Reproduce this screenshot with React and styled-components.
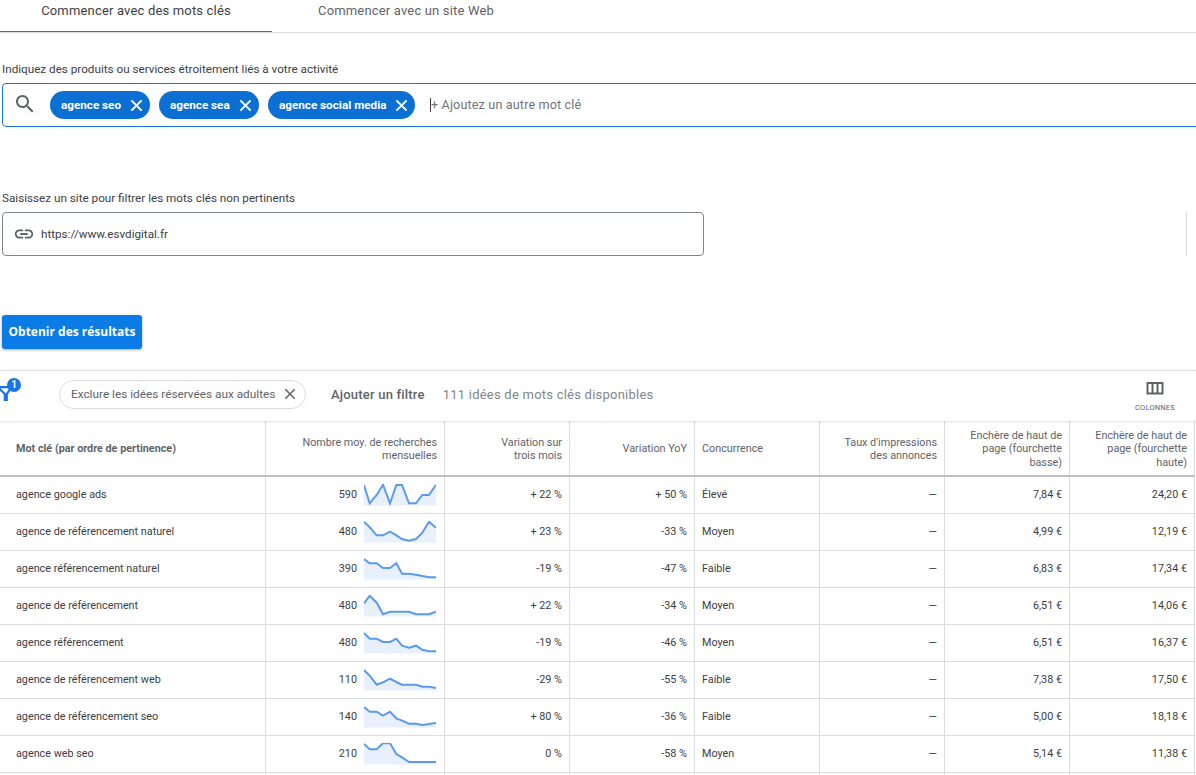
import React from "react";
import styled, { createGlobalStyle } from "styled-components";

const GlobalStyle = createGlobalStyle`
  html, body {
    margin: 0;
    height: 100%;
    overflow: hidden;
    background: #fff;
    font-family: Roboto, "Liberation Sans", sans-serif;
  }
`;

const Page = styled.div`
  width: 1196px;
  height: 775px;
  overflow: hidden;
`;

const Tabs = styled.div`
  display: flex;
  height: 33px;
  box-sizing: border-box;
  border-bottom: 1px solid #dadce0;
`;

const Tab = styled.div`
  width: ${(props) => (props.$active ? 272 : 268)}px;
  height: 32px;
  box-sizing: border-box;
  padding-top: 3px;
  text-align: center;
  font-size: 13px;
  line-height: 16px;
  letter-spacing: 0.17px;
  color: ${(props) => (props.$active ? "#3c4043" : "#5f6368")};
  border-bottom: ${(props) => (props.$active ? "1px solid #1a73e8" : "none")};
`;

const Form = styled.div`
  padding: 29px 0 0 2px;
`;

const Label = styled.div`
  height: 14px;
  margin-top: ${(props) => props.$top || 0}px;
  font-size: 11.7px;
  line-height: 14px;
  color: #3c4043;
`;

const KeywordBox = styled.div`
  display: flex;
  align-items: center;
  width: 1210px;
  height: 44px;
  box-sizing: border-box;
  margin-top: 7px;
  padding-left: 10px;
  border: 1px solid #1a73e8;
  border-radius: 4px;
`;

const SearchIcon = styled.svg`
  width: 24px;
  height: 24px;
  fill: #5f6368;
  margin-right: 13px;
  margin-top: -2px;
`;

const Chips = styled.div`
  display: flex;
  gap: 9px;
`;

const Chip = styled.div`
  display: flex;
  align-items: center;
  justify-content: space-between;
  width: ${(props) => props.$width}px;
  height: 28px;
  box-sizing: border-box;
  padding: 0 4px 0 11px;
  border-radius: 14px;
  background: #0b6fd3;
  color: #fff;
  font-size: 11.7px;
  font-weight: 700;
`;

const ChipClose = styled.svg`
  width: 19px;
  height: 19px;
  fill: #fff;
  stroke: #fff;
  stroke-width: 0.7;
`;

const Placeholder = styled.div`
  margin-left: 15px;
  border-left: 1px solid #3c4043;
  height: 14px;
  line-height: 14px;
  font-size: 12.6px;
  color: #70757a;
  letter-spacing: 0.15px;
  white-space: nowrap;
`;

const SiteRow = styled.div`
  display: flex;
  margin-top: 7px;
`;

const SiteBox = styled.div`
  display: flex;
  align-items: center;
  width: 702px;
  height: 44px;
  box-sizing: border-box;
  padding-left: 10px;
  border: 1px solid #80868b;
  border-radius: 4px;
  font-size: 11.65px;
  color: #3c4043;
`;

const LinkIcon = styled.svg`
  width: 22px;
  height: 22px;
  fill: #5f6368;
  margin-right: 6px;
`;

const SideRule = styled.div`
  width: 1px;
  height: 44px;
  margin-left: 482px;
  background: #dadce0;
`;

const SubmitButton = styled.button`
  display: block;
  width: 140px;
  height: 34px;
  margin: 59px 0 0;
  padding: 0 0 2px;
  border: 0;
  border-radius: 3px;
  background: #0b7ce6;
  color: #fff;
  font-family: "Open Sans", sans-serif;
  font-size: 12px;
  font-weight: 700;
  box-shadow: 0 1px 3px rgba(60, 64, 67, 0.45);
`;

const FilterBar = styled.div`
  position: relative;
  display: flex;
  align-items: center;
  height: 51px;
  box-sizing: border-box;
  margin-top: 21px;
  padding-bottom: 4px;
  border-top: 1px solid #e0e0e0;
  box-shadow: 0 1px 2px rgba(60, 64, 67, 0.15);
`;

const FilterIcon = styled.svg`
  position: absolute;
  left: 0;
  top: 15px;
  width: 12px;
  height: 15px;
  fill: none;
  stroke: #1a73e8;
  stroke-width: 2.2;
`;

const Badge = styled.div`
  position: absolute;
  left: 7px;
  top: 7px;
  width: 14px;
  height: 14px;
  border-radius: 50%;
  background: #1a73e8;
  color: #fff;
  font-size: 10px;
  font-weight: 700;
  line-height: 14px;
  text-align: center;
`;

const AdultChip = styled.div`
  display: flex;
  align-items: center;
  justify-content: space-between;
  width: 247px;
  height: 29px;
  box-sizing: border-box;
  margin-left: 59px;
  padding: 0 6px 0 11px;
  border: 1px solid #dadce0;
  border-radius: 15px;
  font-size: 11.8px;
  color: #5f6368;
`;

const AdultClose = styled.svg`
  width: 18px;
  height: 18px;
  fill: #5f6368;
`;

const AddFilter = styled.div`
  margin-left: 25px;
  font-size: 13px;
  font-weight: 500;
  letter-spacing: 0.2px;
  color: #5f6368;
`;

const IdeaCount = styled.div`
  margin-left: 18px;
  font-size: 13px;
  letter-spacing: 0.23px;
  color: #80868b;
`;

const ColumnsButton = styled.div`
  display: flex;
  flex-direction: column;
  align-items: center;
  margin-left: auto;
  margin-right: 21px;
  margin-top: 6px;
  font-size: 7.5px;
  letter-spacing: 0.2px;
  color: #5f6368;
`;

const ColumnsIcon = styled.svg`
  width: 18px;
  height: 14px;
  margin-bottom: 7px;
  fill: none;
  stroke: #5f6368;
  stroke-width: 2;
`;

const Table = styled.div`
  width: 1195px;
`;

const Row = styled.div`
  display: grid;
  grid-template-columns: 266px 179px 125px 125px 125px 125px 125px 125px;
  height: ${(props) => (props.$head ? 56 : 37)}px;
  box-sizing: border-box;
  border-bottom: ${(props) =>
    props.$head ? "2px solid #bdc1c6" : "1px solid #dadce0"};
`;

const Cell = styled.div`
  display: flex;
  align-items: center;
  justify-content: ${(props) => (props.$left ? "flex-start" : "flex-end")};
  gap: 7px;
  padding: ${(props) =>
    props.$left ? `0 7px 2px ${props.$first ? 16 : 7}px` : "0 7px 2px"};
  border-right: 1px solid #dadce0;
  font-size: 10.8px;
  color: #3c4043;
  white-space: nowrap;
`;

const HeadCell = styled(Cell)`
  padding-top: 2px;
  padding-bottom: 0;
  color: #5f6368;
  font-weight: ${(props) => (props.$first ? 700 : 400)};
  line-height: 13.5px;
  white-space: pre-line;
  text-align: ${(props) => (props.$left ? "left" : "right")};
`;

const Spark = styled.svg`
  width: 72px;
  height: 22px;
  flex: none;
  margin-top: 2px;
  margin-right: 1px;
`;

const SPARK_X = [0, 5.7, 12.7, 19, 26, 32.3, 38, 45, 52, 58.3, 65, 72];

const Sparkline = ({ values }) => {
  const line = values.map((y, i) => `${SPARK_X[i]},${y}`).join(" ");
  return (
    <Spark viewBox="0 0 72 22">
      <polygon points={`0,21.5 ${line} 72,21.5`} fill="#e8f0fe" />
      <polyline points={line} fill="none" stroke="#5a9bf0" strokeWidth="2" />
    </Spark>
  );
};

const CLOSE =
  "M19 6.41L17.59 5 12 10.59 6.41 5 5 6.41 10.59 12 5 17.59 6.41 19 12 13.41 17.59 19 19 17.59 13.41 12z";

const keywords = [
  ["agence seo", 100],
  ["agence sea", 100],
  ["agence social media", 147],
];

const headers = [
  "Mot clé (par ordre de pertinence)",
  "Nombre moy. de recherches\nmensuelles",
  "Variation sur\ntrois mois",
  "Variation YoY",
  "Concurrence",
  "Taux d'impressions\ndes annonces",
  "Enchère de haut de\npage (fourchette\nbasse)",
  "Enchère de haut de\npage (fourchette\nhaute)",
];

const rows = [
  ["agence google ads", "590", [1, 19.3, 11, 0.7, 19.3, 1, 1, 19.3, 19.3, 11, 11, 0.7], "+ 22 %", "+ 50 %", "Élevé", "7,84 €", "24,20 €"],
  ["agence de référencement naturel", "480", [0.7, 6.3, 14.3, 14.3, 10.7, 14.3, 18, 19.7, 18, 11.7, 0.7, 6.7], "+ 23 %", "-33 %", "Moyen", "4,99 €", "12,19 €"],
  ["agence référencement naturel", "390", [1, 5.3, 5.3, 10, 10, 5.3, 15.7, 15.7, 16.7, 18, 19.3, 19.3], "-19 %", "-47 %", "Faible", "6,83 €", "17,34 €"],
  ["agence de référencement", "480", [8.3, 0.7, 7.7, 19.3, 16.7, 16.7, 16.7, 16.7, 19.3, 19.3, 19.3, 16.7], "+ 22 %", "-34 %", "Moyen", "6,51 €", "14,06 €"],
  ["agence référencement", "480", [1, 6.7, 6.7, 10, 10, 6.7, 13.7, 15.7, 13.7, 17.7, 19.3, 19.3], "-19 %", "-46 %", "Moyen", "6,51 €", "16,37 €"],
  ["agence de référencement web", "110", [1, 6.7, 15.7, 13.3, 9.7, 13, 15.7, 15.7, 15.7, 17.7, 17.7, 19], "-29 %", "-55 %", "Faible", "7,38 €", "17,50 €"],
  ["agence de référencement seo", "140", [1, 5.7, 5.7, 9.7, 5.7, 12.3, 14.7, 17.7, 17.7, 19, 18, 17], "+ 80 %", "-36 %", "Faible", "5,00 €", "18,18 €"],
  ["agence web seo", "210", [1, 6.3, 6.3, 0.3, 0.3, 11, 14.3, 19, 19, 19, 19, 19], "0 %", "-58 %", "Moyen", "5,14 €", "11,38 €"],
];

export default function App() {
  return (
    <Page>
      <GlobalStyle />
      <Tabs>
        <Tab $active>Commencer avec des mots clés</Tab>
        <Tab>Commencer avec un site Web</Tab>
      </Tabs>
      <Form>
        <Label>Indiquez des produits ou services étroitement liés à votre activité</Label>
        <KeywordBox>
          <SearchIcon viewBox="0 0 24 24">
            <path d="M15.5 14h-.79l-.28-.27C15.41 12.59 16 11.11 16 9.5 16 5.91 13.09 3 9.5 3S3 5.91 3 9.5 5.91 16 9.5 16c1.61 0 3.09-.59 4.23-1.57l.27.28v.79l5 4.99L20.49 19l-4.99-5zm-6 0C7.01 14 5 11.99 5 9.5S7.01 5 9.5 5 14 7.01 14 9.5 11.99 14 9.5 14z" />
          </SearchIcon>
          <Chips>
            {keywords.map(([word, width]) => (
              <Chip key={word} $width={width}>
                {word}
                <ChipClose viewBox="0 0 24 24">
                  <path d={CLOSE} />
                </ChipClose>
              </Chip>
            ))}
          </Chips>
          <Placeholder>+ Ajoutez un autre mot clé</Placeholder>
        </KeywordBox>
        <Label $top={64}>Saisissez un site pour filtrer les mots clés non pertinents</Label>
        <SiteRow>
          <SiteBox>
            <LinkIcon viewBox="0 0 24 24">
              <path d="M3.9 12c0-1.71 1.39-3.1 3.1-3.1h4V7H7c-2.76 0-5 2.24-5 5s2.24 5 5 5h4v-1.9H7c-1.71 0-3.1-1.39-3.1-3.1zM8 13h8v-2H8v2zm9-6h-4v1.9h4c1.71 0 3.1 1.39 3.1 3.1s-1.39 3.1-3.1 3.1h-4V17h4c2.76 0 5-2.24 5-5s-2.24-5-5-5z" />
            </LinkIcon>
            https://www.esvdigital.fr
          </SiteBox>
          <SideRule />
        </SiteRow>
        <SubmitButton>Obtenir des résultats</SubmitButton>
      </Form>
      <FilterBar>
        <FilterIcon viewBox="0 0 12 15">
          <path d="M-2 1.2h13.5L6.8 8v5.8H4.8V8z" />
        </FilterIcon>
        <Badge>1</Badge>
        <AdultChip>
          Exclure les idées réservées aux adultes
          <AdultClose viewBox="0 0 24 24">
            <path d={CLOSE} />
          </AdultClose>
        </AdultChip>
        <AddFilter>Ajouter un filtre</AddFilter>
        <IdeaCount>111 idées de mots clés disponibles</IdeaCount>
        <ColumnsButton>
          <ColumnsIcon viewBox="0 0 18 14">
            <rect x="1.5" y="1" width="15" height="10.5" />
            <path d="M6.5 1v10.5M11.5 1v10.5" />
          </ColumnsIcon>
          COLONNES
        </ColumnsButton>
      </FilterBar>
      <Table>
        <Row $head>
          {headers.map((text, i) => (
            <HeadCell key={text} $left={i === 0 || i === 4} $first={i === 0}>
              <span>{text}</span>
            </HeadCell>
          ))}
        </Row>
        {rows.map(([name, volume, spark, quarter, year, level, low, high]) => (
          <Row key={name}>
            <Cell $left $first>{name}</Cell>
            <Cell>
              {volume}
              <Sparkline values={spark} />
            </Cell>
            <Cell>{quarter}</Cell>
            <Cell>{year}</Cell>
            <Cell $left>{level}</Cell>
            <Cell>—</Cell>
            <Cell>{low}</Cell>
            <Cell>{high}</Cell>
          </Row>
        ))}
        <Row>
          {headers.map((text) => (
            <Cell key={text} />
          ))}
        </Row>
      </Table>
    </Page>
  );
}
